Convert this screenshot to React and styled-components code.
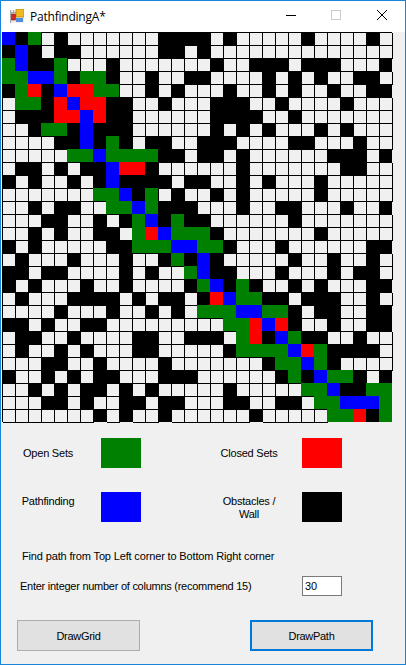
import React from "react";
import styled, { createGlobalStyle } from "styled-components";

const GRID = [
  "b#g.#.......####.#.....#....#.",
  "#b#.##......##.#..............",
  "gb##g...#.......#..###.###...#",
  "ggbbg#gg#..#..##....#.#.#..##.",
  "#gr#brrgg..#.#...#..#.#..#..##",
  ".gg#rbrr##..#...###..#....#...",
  ".###rrbr##......####..#.......",
  "..#gg#b###......#.#.#...#.#...",
  "....##b#g#.##..###....##...#..",
  ".....ggbgggg##.##.#......###.#",
  ".##.#.##brr#......#.......##..",
  "#.#..#.#b####.##..#.#...#.....",
  ".......ggb#g.#..#.#.....#.....",
  "..#.##..ggbg###...#..##...#..#",
  "...##..#.#gb#g##......#.......",
  "..#.#..##.grbggg#.......#.....",
  "#.#.....##gggbbgg#...#......##",
  ".#...#...#..#g#b#.....#..#..#.",
  "##.##....#.#..gb##...#...#.##.",
  "#.#...#..#....#gb#g#..#.#...##",
  ".#...####.#.##.#rbgg##.###..#.",
  "....#...#..#.#.gggbbgg#.##..##",
  "##.#..##.........ggrbr#..#..##",
  ".##..#....##..###.gr#bg##..#..",
  ".#..#.#...##.....#ggggbrg####.",
  "...##..#....#.......#ggbg#....",
  "#..#.#.##...###......#g#bgg#.#",
  "..#.#.##.#.#.....#.....ggb##gg",
  "...##.#..##.##...##..##.ggbbbg",
  ".......#.#..#......#.....ggr#g",
];

const COLORS = { "#": "#000000", g: "#008000", b: "#0000ff", r: "#ff0000" };

const GlobalStyle = createGlobalStyle`
  html, body { margin: 0; padding: 0; background: #f0f0f0; }
  #root { width: 406px; height: 665px; }
`;

const Window = styled.div`
  box-sizing: border-box;
  width: 406px;
  height: 665px;
  display: flex;
  flex-direction: column;
  background: #f0f0f0;
  border: 1px solid #1a84d8;
  font-family: "Liberation Sans", Arial, sans-serif;
  font-size: 11px;
  color: #000;
  overflow: hidden;
`;

const TitleBar = styled.div`
  box-sizing: border-box;
  height: 31px;
  flex: none;
  display: flex;
  align-items: center;
  background: #fff;
  padding: 0 0 1px 9px;
`;

const AppIcon = styled.svg`
  width: 14px;
  height: 14px;
  flex: none;
  margin-right: 1px;
`;

const Title = styled.span`
  margin-left: 5px;
  flex: 1;
  font-family: "Open Sans", sans-serif;
  font-size: 12px;
  letter-spacing: -0.22px;
  color: #000;
`;

const WindowButton = styled.div`
  width: 46px;
  height: 28px;
  flex: none;
  align-self: flex-start;
  display: flex;
  align-items: center;
  justify-content: center;
`;

const GlyphSvg = styled.svg`
  width: 12px;
  height: 12px;
`;

const GridPanel = styled.div`
  display: grid;
  grid-template-columns: repeat(30, 13px);
  grid-auto-rows: 13px;
  margin-left: 1px;
  flex: none;
`;

const Cell = styled.div`
  background: ${(p) => p.$color || "#f0f0f0"};
  box-shadow: ${(p) =>
    p.$color ? "none" : "inset 1px 1px 0 #000, 1px 1px 0 #000"};
`;

const Legend = styled.div`
  display: grid;
  grid-template-columns: 201px 1fr;
  grid-auto-rows: 30px;
  row-gap: 24px;
  margin-top: 16px;
  padding-left: 17px;
`;

const LegendItem = styled.div`
  display: flex;
  align-items: flex-start;
`;

const LegendLabel = styled.div`
  width: 60px;
  margin-right: 23px;
  padding-top: ${(p) => p.$top}px;
  text-align: center;
  line-height: 13px;
  letter-spacing: -0.22px;
`;

const Swatch = styled.div`
  width: 40px;
  height: 30px;
  background: ${(p) => p.$color};
`;

const Hint = styled.div`
  margin: 28px 0 0 21px;
  line-height: 13px;
  letter-spacing: -0.15px;
`;

const InputRow = styled.div`
  display: flex;
  align-items: center;
  margin-top: 13px;
  padding-left: 19px;
`;

const InputLabel = styled.label`
  width: 282px;
  line-height: 13px;
  letter-spacing: -0.26px;
`;

const NumberField = styled.input`
  box-sizing: border-box;
  width: 40px;
  height: 20px;
  padding: 0 0 0 2px;
  border: 1px solid #7a7a7a;
  border-radius: 0;
  background: #fff;
  outline: none;
  font-family: "Liberation Sans", Arial, sans-serif;
  font-size: 11px;
  color: #000;
`;

const ButtonRow = styled.div`
  display: flex;
  justify-content: space-between;
  margin-top: 24px;
  padding: 0 32px 0 16px;
`;

const ActionButton = styled.button`
  box-sizing: border-box;
  width: 123px;
  height: 31px;
  padding: 0;
  background: #e1e1e1;
  border: ${(p) => (p.$focused ? "2px solid #0078d7" : "1px solid #adadad")};
  border-radius: 0;
  font-family: "Liberation Sans", Arial, sans-serif;
  font-size: 11px;
  letter-spacing: -0.3px;
  color: #000;
`;

export default function App() {
  return (
    <>
      <GlobalStyle />
      <Window>
        <TitleBar>
          <AppIcon viewBox="0 0 14 14">
            <rect x="0" y="1" width="14" height="13" fill="#ececec" />
            <path d="M0.5 1v13M3.5 1v3M0 3.5h6" stroke="#a8a8a8" fill="none" />
            <rect x="6" y="0" width="8" height="8" fill="#f2b81f" stroke="#b98a14" strokeWidth="0.8" />
            <rect x="1.5" y="5" width="4" height="6" fill="#cc2a22" stroke="#7a1c18" strokeWidth="0.6" />
            <rect x="6" y="9" width="7" height="4" fill="#4f8fe0" />
          </AppIcon>
          <Title>PathfindingA*</Title>
          <WindowButton>
            <GlyphSvg viewBox="0 0 12 12">
              <path d="M2 6.5h10" stroke="#000" strokeWidth="1" />
            </GlyphSvg>
          </WindowButton>
          <WindowButton>
            <GlyphSvg viewBox="0 0 12 12">
              <rect x="1.5" y="1.5" width="9" height="9" fill="none" stroke="#cccccc" />
            </GlyphSvg>
          </WindowButton>
          <WindowButton>
            <GlyphSvg viewBox="0 0 12 12">
              <path d="M1 1l10 10M11 1L1 11" stroke="#000" strokeWidth="1" />
            </GlyphSvg>
          </WindowButton>
        </TitleBar>

        <GridPanel>
          {GRID.flatMap((row, y) =>
            row.split("").map((c, x) => <Cell key={`${y}-${x}`} $color={COLORS[c]} />)
          )}
        </GridPanel>

        <Legend>
          <LegendItem>
            <LegendLabel $top={9}>Open Sets</LegendLabel>
            <Swatch $color="#008000" />
          </LegendItem>
          <LegendItem>
            <LegendLabel $top={9}>Closed Sets</LegendLabel>
            <Swatch $color="#ff0000" />
          </LegendItem>
          <LegendItem>
            <LegendLabel $top={3}>Pathfinding</LegendLabel>
            <Swatch $color="#0000ff" />
          </LegendItem>
          <LegendItem>
            <LegendLabel $top={3}>Obstacles /<br />Wall</LegendLabel>
            <Swatch $color="#000000" />
          </LegendItem>
        </Legend>

        <Hint>Find path from Top Left corner to Bottom Right corner</Hint>

        <InputRow>
          <InputLabel>Enter integer number of columns (recommend 15)</InputLabel>
          <NumberField defaultValue="30" />
        </InputRow>

        <ButtonRow>
          <ActionButton>DrawGrid</ActionButton>
          <ActionButton $focused>DrawPath</ActionButton>
        </ButtonRow>
      </Window>
    </>
  );
}
